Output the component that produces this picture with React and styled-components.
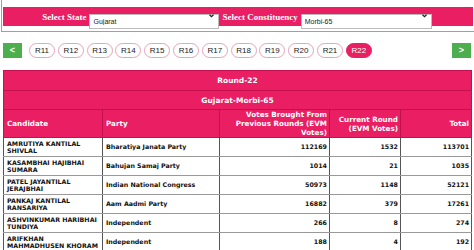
import styled, { createGlobalStyle } from "styled-components";

const GlobalStyle = createGlobalStyle`
  html, body { margin: 0; padding: 0; background: #fff; }
  body { width: 474px; overflow: hidden; font-family: "DejaVu Sans", Verdana, sans-serif; }
`;

const PINK = "#e91e63";

const Panel = styled.div`
  margin-left: 1px;
  width: 470px;
  border: 1px solid #a0a0a0;
  border-top: 0;
  padding: 7px 1px 5px 1px;
`;

const FilterBar = styled.div`
  height: 19px;
  background: ${PINK};
  display: flex;
  align-items: center;
  justify-content: center;
  padding-right: 5px;
`;

const Label = styled.span`
  font-family: "Liberation Serif", "Times New Roman", serif;
  font-weight: bold;
  font-size: 9px;
  color: #fff;
  margin: 0 3px 0 3px;
`;

const SelectWrap = styled.div`
  position: relative;
  width: ${(p) => p.w}px;
  height: 15px;
`;

const Select = styled.select`
  appearance: none;
  width: 100%;
  height: 15px;
  border: 1px solid #bbb;
  border-radius: 0;
  background: #fff;
  font-family: "Liberation Sans", Arial, sans-serif;
  font-size: 7px;
  color: #222;
  padding: 0 0 0 3px;
  outline: none;
`;

const Chevron = styled.svg`
  position: absolute;
  right: 5px;
  top: 5px;
  pointer-events: none;
`;

const RoundNav = styled.div`
  display: flex;
  align-items: center;
  padding: 0 3px;
  margin-top: 10px;
  height: 16px;
`;

const NavButton = styled.button`
  width: 19px;
  height: 15px;
  padding: 0;
  border: 0;
  background: #4cae4c;
  color: #fff;
  font-family: "Liberation Sans", Arial, sans-serif;
  font-size: 9px;
  font-weight: bold;
  line-height: 15px;
  display: flex;
  align-items: center;
  justify-content: center;
`;

const Pills = styled.div`
  display: flex;
  gap: 2.8px;
  margin-left: 7px;
  flex: 1;
`;

const Pill = styled.span`
  box-sizing: border-box;
  width: 26px;
  height: 15px;
  border-radius: 8px;
  border: 1px solid ${(p) => (p.active ? PINK : "#e7a3b9")};
  background: ${(p) => (p.active ? PINK : "#fff")};
  color: ${(p) => (p.active ? "#fff" : "#222")};
  font-family: "Liberation Sans", Arial, sans-serif;
  font-size: 8px;
  display: flex;
  align-items: center;
  justify-content: center;
`;

const Table = styled.table`
  margin: 12px 0 0 3px;
  width: 468px;
  border-collapse: collapse;
  table-layout: fixed;
  font-weight: bold;
`;

const TitleCell = styled.th`
  background: ${PINK};
  color: #fff;
  font-size: 7.5px;
  height: ${(p) => p.h}px;
  padding: 0;
  border: 1px solid #c4114d;
  text-align: center;
`;

const HeadCell = styled.th`
  background: ${PINK};
  color: #fff;
  font-size: 7.2px;
  line-height: 9px;
  height: 26px;
  padding: 0 2px 0 3px;
  border: 1px solid #c4114d;
  text-align: ${(p) => p.align || "left"};
`;

const Cell = styled.td`
  font-size: 6.3px;
  line-height: 7.4px;
  color: #111;
  height: 18px;
  padding: 0 2px 0 3px;
  border: 1px solid #555;
  border-top-color: #999;
  border-bottom-color: #999;
  text-align: ${(p) => p.align || "left"};
  vertical-align: middle;
`;

const rows = [
  ["AMRUTIYA KANTILAL SHIVLAL", "Bharatiya Janata Party", 112169, 1532, 113701],
  ["KASAMBHAI HAJIBHAI SUMARA", "Bahujan Samaj Party", 1014, 21, 1035],
  ["PATEL JAYANTILAL JERAJBHAI", "Indian National Congress", 50973, 1148, 52121],
  ["PANKAJ KANTILAL RANSARIYA", "Aam Aadmi Party", 16882, 379, 17261],
  ["ASHVINKUMAR HARIBHAI TUNDIYA", "Independent", 266, 8, 274],
  ["ARIFKHAN MAHMADHUSEN KHORAM", "Independent", 188, 4, 192],
];

const rounds = ["R11", "R12", "R13", "R14", "R15", "R16", "R17", "R18", "R19", "R20", "R21", "R22"];

const ChevronIcon = () => (
  <Chevron width="5" height="4" viewBox="0 0 10 7">
    <path d="M1 1 L5 5 L9 1" stroke="#222" strokeWidth="2.4" fill="none" />
  </Chevron>
);

export default function App() {
  return (
    <>
      <GlobalStyle />
      <Panel>
        <FilterBar>
          <Label>Select State</Label>
          <SelectWrap w={130}>
            <Select defaultValue="Gujarat">
              <option>Gujarat</option>
            </Select>
            <ChevronIcon />
          </SelectWrap>
          <Label>Select Constituency</Label>
          <SelectWrap w={131}>
            <Select defaultValue="Morbi-65">
              <option>Morbi-65</option>
            </Select>
            <ChevronIcon />
          </SelectWrap>
        </FilterBar>
      </Panel>

      <RoundNav>
        <NavButton>&lt;</NavButton>
        <Pills>
          {rounds.map((r) => (
            <Pill key={r} active={r === "R22"}>{r}</Pill>
          ))}
        </Pills>
        <NavButton>&gt;</NavButton>
      </RoundNav>

      <Table>
        <colgroup>
          <col style={{ width: 99 }} />
          <col style={{ width: 117 }} />
          <col style={{ width: 110 }} />
          <col style={{ width: 71 }} />
          <col style={{ width: 71 }} />
        </colgroup>
        <thead>
          <tr><TitleCell colSpan={5} h={19}>Round-22</TitleCell></tr>
          <tr><TitleCell colSpan={5} h={18}>Gujarat-Morbi-65</TitleCell></tr>
          <tr>
            <HeadCell>Candidate</HeadCell>
            <HeadCell>Party</HeadCell>
            <HeadCell align="right">Votes Brought From Previous Rounds (EVM Votes)</HeadCell>
            <HeadCell align="right">Current Round (EVM Votes)</HeadCell>
            <HeadCell align="right">Total</HeadCell>
          </tr>
        </thead>
        <tbody>
          {rows.map((r) => (
            <tr key={r[0]}>
              <Cell>{r[0]}</Cell>
              <Cell>{r[1]}</Cell>
              <Cell align="right">{r[2]}</Cell>
              <Cell align="right">{r[3]}</Cell>
              <Cell align="right">{r[4]}</Cell>
            </tr>
          ))}
        </tbody>
      </Table>
    </>
  );
}
